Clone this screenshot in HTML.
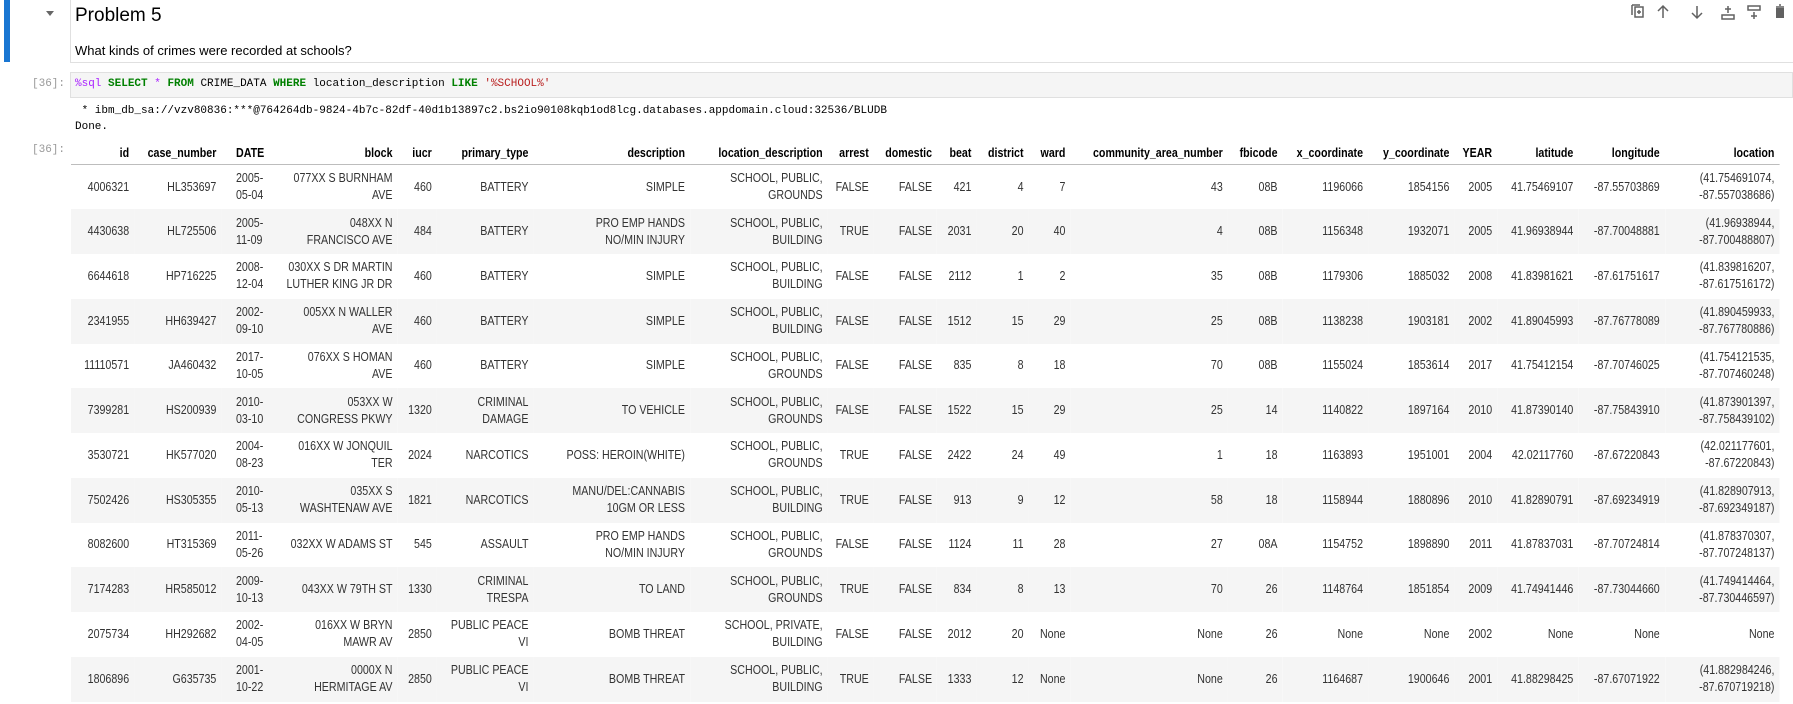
<!DOCTYPE html>
<html><head><meta charset="utf-8"><style>
body{margin:0;width:1793px;height:704px;overflow:hidden;background:#fff;font-family:"Liberation Sans",sans-serif;color:#000;position:relative}
.abs{position:absolute}
.bar{left:4px;top:0;width:6px;height:62px;background:#1976d2}
.mdcell{left:70px;top:0;width:1723px;height:62px;border-left:1px solid #e0e0e0;border-bottom:1px solid #e0e0e0}
.h{left:75px;top:5px;font-size:19px;color:#000}
.q{left:75px;top:43px;font-size:13px}
.tri{left:46px;top:11px;width:0;height:0;border-left:4px solid transparent;border-right:4px solid transparent;border-top:5px solid #666}
.prompt{font-family:"Liberation Mono",monospace;font-size:11px;color:#999}
.inbox{left:70px;top:72px;width:1723px;height:26px;background:#f5f5f5;border:1px solid #e0e0e0;box-sizing:border-box}
.mono{font-family:"Liberation Mono",monospace;font-size:11px;white-space:pre}
table{position:absolute;left:71px;top:142px;width:2003px;border-collapse:collapse;table-layout:fixed;font-size:12.5px;color:#333;transform:scaleX(0.853);transform-origin:0 0}
th{font-weight:bold;color:#000;text-align:right;padding:0 6px;height:22px;border-bottom:1px solid #bdbdbd;white-space:nowrap;font-size:12.5px;overflow:hidden}
td{text-align:right;padding:0 6px;height:44.75px;line-height:17px;white-space:nowrap;box-sizing:border-box;overflow:hidden}
tbody tr:nth-child(even) td{background:#f5f5f5}
td.l,th.l{text-align:left;padding-left:17px;padding-right:0}
</style></head><body>
<div class="abs bar"></div>
<div class="abs mdcell"></div>
<div class="abs tri"></div>
<div class="abs h">Problem 5</div>
<div class="abs q">What kinds of crimes were recorded at schools?</div>
<svg class="abs" style="left:1628px;top:2px" width="165" height="20" viewBox="0 0 165 20" fill="none" stroke="#616161" stroke-width="1.5">
<rect x="7" y="5" width="8" height="10"/><path d="M4 3v10M4 3h8M11 8v4M9 10h4"/>
<path d="M35 16V4M30 9l5-5 5 5"/>
<path d="M69 4v12M64 11l5 5 5-5"/>
<path d="M94 17h12v-4H94zM100 4v7M97 7h6"/>
<path d="M120 4h12v4h-12zM126 10v7M123 14h6"/>
<path d="M148 5h8M151 3h2" /><rect x="148" y="6" width="8" height="10" fill="#616161" stroke="none"/>
</svg>
<div class="abs prompt" style="left:32px;top:78px">[36]:</div>
<div class="abs inbox"></div>
<div class="abs mono" style="left:75px;top:78px"><span style="color:#a2f">%sql</span> <b style="color:#008000">SELECT</b> <span style="color:#a2f">*</span> <b style="color:#008000">FROM</b> CRIME_DATA <b style="color:#008000">WHERE</b> location_description <b style="color:#008000">LIKE</b> <span style="color:#ba2121">'%SCHOOL%'</span></div>
<div class="abs mono" style="left:75px;top:105px"> * ibm_db_sa://vzv80836:***@764264db-9824-4b7c-82df-40d1b13897c2.bs2io90108kqb1od8lcg.databases.appdomain.cloud:32536/BLUDB</div>
<div class="abs mono" style="left:75px;top:121px">Done.</div>
<div class="abs prompt" style="left:32px;top:144px">[36]:</div>
<table>
<colgroup><col style="width:74px"><col style="width:102px"><col style="width:61px"><col style="width:145px"><col style="width:46px"><col style="width:113px"><col style="width:183px"><col style="width:161px"><col style="width:54px"><col style="width:74px"><col style="width:46px"><col style="width:61px"><col style="width:49px"><col style="width:184px"><col style="width:64px"><col style="width:100px"><col style="width:101px"><col style="width:50px"><col style="width:95px"><col style="width:101px"><col style="width:134px"></colgroup>
<thead><tr><th>id</th><th>case_number</th><th class="l">DATE</th><th>block</th><th>iucr</th><th>primary_type</th><th>description</th><th>location_description</th><th>arrest</th><th>domestic</th><th>beat</th><th>district</th><th>ward</th><th>community_area_number</th><th>fbicode</th><th>x_coordinate</th><th>y_coordinate</th><th>YEAR</th><th>latitude</th><th>longitude</th><th>location</th></tr></thead>
<tbody>
<tr><td>4006321</td><td>HL353697</td><td class="l">2005-<br>05-04</td><td>077XX S BURNHAM<br>AVE</td><td>460</td><td>BATTERY</td><td>SIMPLE</td><td>SCHOOL, PUBLIC,<br>GROUNDS</td><td>FALSE</td><td>FALSE</td><td>421</td><td>4</td><td>7</td><td>43</td><td>08B</td><td>1196066</td><td>1854156</td><td>2005</td><td>41.75469107</td><td>-87.55703869</td><td>(41.754691074,<br>-87.557038686)</td></tr>
<tr><td>4430638</td><td>HL725506</td><td class="l">2005-<br>11-09</td><td>048XX N<br>FRANCISCO AVE</td><td>484</td><td>BATTERY</td><td>PRO EMP HANDS<br>NO/MIN INJURY</td><td>SCHOOL, PUBLIC,<br>BUILDING</td><td>TRUE</td><td>FALSE</td><td>2031</td><td>20</td><td>40</td><td>4</td><td>08B</td><td>1156348</td><td>1932071</td><td>2005</td><td>41.96938944</td><td>-87.70048881</td><td>(41.96938944,<br>-87.700488807)</td></tr>
<tr><td>6644618</td><td>HP716225</td><td class="l">2008-<br>12-04</td><td>030XX S DR MARTIN<br>LUTHER KING JR DR</td><td>460</td><td>BATTERY</td><td>SIMPLE</td><td>SCHOOL, PUBLIC,<br>BUILDING</td><td>FALSE</td><td>FALSE</td><td>2112</td><td>1</td><td>2</td><td>35</td><td>08B</td><td>1179306</td><td>1885032</td><td>2008</td><td>41.83981621</td><td>-87.61751617</td><td>(41.839816207,<br>-87.617516172)</td></tr>
<tr><td>2341955</td><td>HH639427</td><td class="l">2002-<br>09-10</td><td>005XX N WALLER<br>AVE</td><td>460</td><td>BATTERY</td><td>SIMPLE</td><td>SCHOOL, PUBLIC,<br>BUILDING</td><td>FALSE</td><td>FALSE</td><td>1512</td><td>15</td><td>29</td><td>25</td><td>08B</td><td>1138238</td><td>1903181</td><td>2002</td><td>41.89045993</td><td>-87.76778089</td><td>(41.890459933,<br>-87.767780886)</td></tr>
<tr><td>11110571</td><td>JA460432</td><td class="l">2017-<br>10-05</td><td>076XX S HOMAN<br>AVE</td><td>460</td><td>BATTERY</td><td>SIMPLE</td><td>SCHOOL, PUBLIC,<br>GROUNDS</td><td>FALSE</td><td>FALSE</td><td>835</td><td>8</td><td>18</td><td>70</td><td>08B</td><td>1155024</td><td>1853614</td><td>2017</td><td>41.75412154</td><td>-87.70746025</td><td>(41.754121535,<br>-87.707460248)</td></tr>
<tr><td>7399281</td><td>HS200939</td><td class="l">2010-<br>03-10</td><td>053XX W<br>CONGRESS PKWY</td><td>1320</td><td>CRIMINAL<br>DAMAGE</td><td>TO VEHICLE</td><td>SCHOOL, PUBLIC,<br>GROUNDS</td><td>FALSE</td><td>FALSE</td><td>1522</td><td>15</td><td>29</td><td>25</td><td>14</td><td>1140822</td><td>1897164</td><td>2010</td><td>41.87390140</td><td>-87.75843910</td><td>(41.873901397,<br>-87.758439102)</td></tr>
<tr><td>3530721</td><td>HK577020</td><td class="l">2004-<br>08-23</td><td>016XX W JONQUIL<br>TER</td><td>2024</td><td>NARCOTICS</td><td>POSS: HEROIN(WHITE)</td><td>SCHOOL, PUBLIC,<br>GROUNDS</td><td>TRUE</td><td>FALSE</td><td>2422</td><td>24</td><td>49</td><td>1</td><td>18</td><td>1163893</td><td>1951001</td><td>2004</td><td>42.02117760</td><td>-87.67220843</td><td>(42.021177601,<br>-87.67220843)</td></tr>
<tr><td>7502426</td><td>HS305355</td><td class="l">2010-<br>05-13</td><td>035XX S<br>WASHTENAW AVE</td><td>1821</td><td>NARCOTICS</td><td>MANU/DEL:CANNABIS<br>10GM OR LESS</td><td>SCHOOL, PUBLIC,<br>BUILDING</td><td>TRUE</td><td>FALSE</td><td>913</td><td>9</td><td>12</td><td>58</td><td>18</td><td>1158944</td><td>1880896</td><td>2010</td><td>41.82890791</td><td>-87.69234919</td><td>(41.828907913,<br>-87.692349187)</td></tr>
<tr><td>8082600</td><td>HT315369</td><td class="l">2011-<br>05-26</td><td>032XX W ADAMS ST</td><td>545</td><td>ASSAULT</td><td>PRO EMP HANDS<br>NO/MIN INJURY</td><td>SCHOOL, PUBLIC,<br>GROUNDS</td><td>FALSE</td><td>FALSE</td><td>1124</td><td>11</td><td>28</td><td>27</td><td>08A</td><td>1154752</td><td>1898890</td><td>2011</td><td>41.87837031</td><td>-87.70724814</td><td>(41.878370307,<br>-87.707248137)</td></tr>
<tr><td>7174283</td><td>HR585012</td><td class="l">2009-<br>10-13</td><td>043XX W 79TH ST</td><td>1330</td><td>CRIMINAL<br>TRESPA</td><td>TO LAND</td><td>SCHOOL, PUBLIC,<br>GROUNDS</td><td>TRUE</td><td>FALSE</td><td>834</td><td>8</td><td>13</td><td>70</td><td>26</td><td>1148764</td><td>1851854</td><td>2009</td><td>41.74941446</td><td>-87.73044660</td><td>(41.749414464,<br>-87.730446597)</td></tr>
<tr><td>2075734</td><td>HH292682</td><td class="l">2002-<br>04-05</td><td>016XX W BRYN<br>MAWR AV</td><td>2850</td><td>PUBLIC PEACE<br>VI</td><td>BOMB THREAT</td><td>SCHOOL, PRIVATE,<br>BUILDING</td><td>FALSE</td><td>FALSE</td><td>2012</td><td>20</td><td>None</td><td>None</td><td>26</td><td>None</td><td>None</td><td>2002</td><td>None</td><td>None</td><td>None</td></tr>
<tr><td>1806896</td><td>G635735</td><td class="l">2001-<br>10-22</td><td>0000X N<br>HERMITAGE AV</td><td>2850</td><td>PUBLIC PEACE<br>VI</td><td>BOMB THREAT</td><td>SCHOOL, PUBLIC,<br>BUILDING</td><td>TRUE</td><td>FALSE</td><td>1333</td><td>12</td><td>None</td><td>None</td><td>26</td><td>1164687</td><td>1900646</td><td>2001</td><td>41.88298425</td><td>-87.67071922</td><td>(41.882984246,<br>-87.670719218)</td></tr>
</tbody></table>
</body></html>
